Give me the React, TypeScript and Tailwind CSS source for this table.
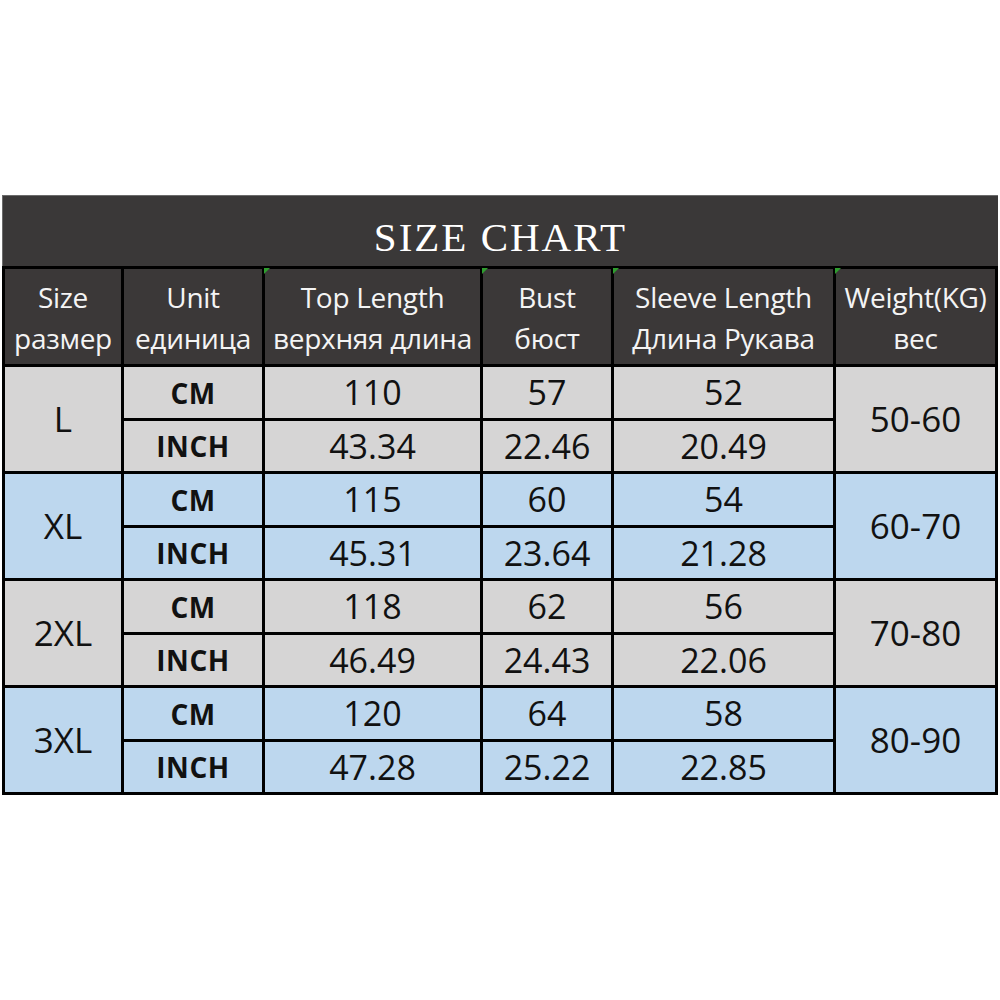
import React from "react"

const rows = [
  { size: "L", tone: "bg-[#d6d5d5]", weight: "50-60", cm: ["110", "57", "52"], inch: ["43.34", "22.46", "20.49"] },
  { size: "XL", tone: "bg-[#bdd7ee]", weight: "60-70", cm: ["115", "60", "54"], inch: ["45.31", "23.64", "21.28"] },
  { size: "2XL", tone: "bg-[#d6d5d5]", weight: "70-80", cm: ["118", "62", "56"], inch: ["46.49", "24.43", "22.06"] },
  { size: "3XL", tone: "bg-[#bdd7ee]", weight: "80-90", cm: ["120", "64", "58"], inch: ["47.28", "25.22", "22.85"] },
]

const headers = [
  { en: "Size", ru: "размер", mark: false },
  { en: "Unit", ru: "единица", mark: false },
  { en: "Top Length", ru: "верхняя длина", mark: true },
  { en: "Bust", ru: "бюст", mark: true },
  { en: "Sleeve Length", ru: "Длина Рукава", mark: true },
  { en: "Weight(KG)", ru: "вес", mark: true },
]

const sans = "font-['Open_Sans','Noto_Sans',sans-serif]"

export default function App() {
  return (
    <div className="bg-white w-[1000px] h-[1000px] pt-[195px] pl-[2px]">
      <div className="w-[996px]">
        {/* title bar */}
        <div className="h-[71px] bg-[#3a3838] border-t border-l border-[#6b6b6b] flex items-center justify-center pt-[12px]">
          <span className="text-[41px] text-white font-['Liberation_Serif',serif] tracking-[2px] leading-none">
            SIZE CHART
          </span>
        </div>

        {/* table */}
        <div
          className={`grid grid-cols-[116px_138px_215px_128px_219px_159px] grid-rows-[95px_51px_50px_51px_50px_51px_50px_51px_50px] gap-[3px] p-[3px] bg-black ${sans}`}
        >
          {headers.map((h) => (
            <div
              key={h.en}
              className="relative bg-[#3b3838] text-[#f4f4f4] text-[28px] leading-[41px] flex flex-col items-center justify-center pt-[2px] whitespace-nowrap tracking-[-0.3px]"
            >
              {h.mark && (
                <span className="absolute -left-[1px] -top-[1px] w-0 h-0 border-t-[6px] border-r-[6px] border-t-[#2e9e2e] border-r-transparent" />
              )}
              <span>{h.en}</span>
              <span>{h.ru}</span>
            </div>
          ))}

          {rows.map((r) => (
            <React.Fragment key={r.size}>
              <div className={`${r.tone} row-span-2 flex items-center justify-center text-[35px] text-[#111]`}>
                {r.size}
              </div>
              <div className={`${r.tone} flex items-center justify-center text-[28px] font-bold text-[#111] tracking-[0.5px]`}>CM</div>
              {r.cm.map((v, i) => (
                <div key={"c" + i} className={`${r.tone} flex items-center justify-center text-[34px] text-[#111]`}>
                  {v}
                </div>
              ))}
              <div className={`${r.tone} row-span-2 flex items-center justify-center text-[35px] text-[#111]`}>
                {r.weight}
              </div>
              <div className={`${r.tone} flex items-center justify-center text-[28px] font-bold text-[#111] tracking-[0.5px]`}>INCH</div>
              {r.inch.map((v, i) => (
                <div key={"i" + i} className={`${r.tone} flex items-center justify-center text-[34px] text-[#111]`}>
                  {v}
                </div>
              ))}
            </React.Fragment>
          ))}
        </div>
      </div>
    </div>
  )
}
